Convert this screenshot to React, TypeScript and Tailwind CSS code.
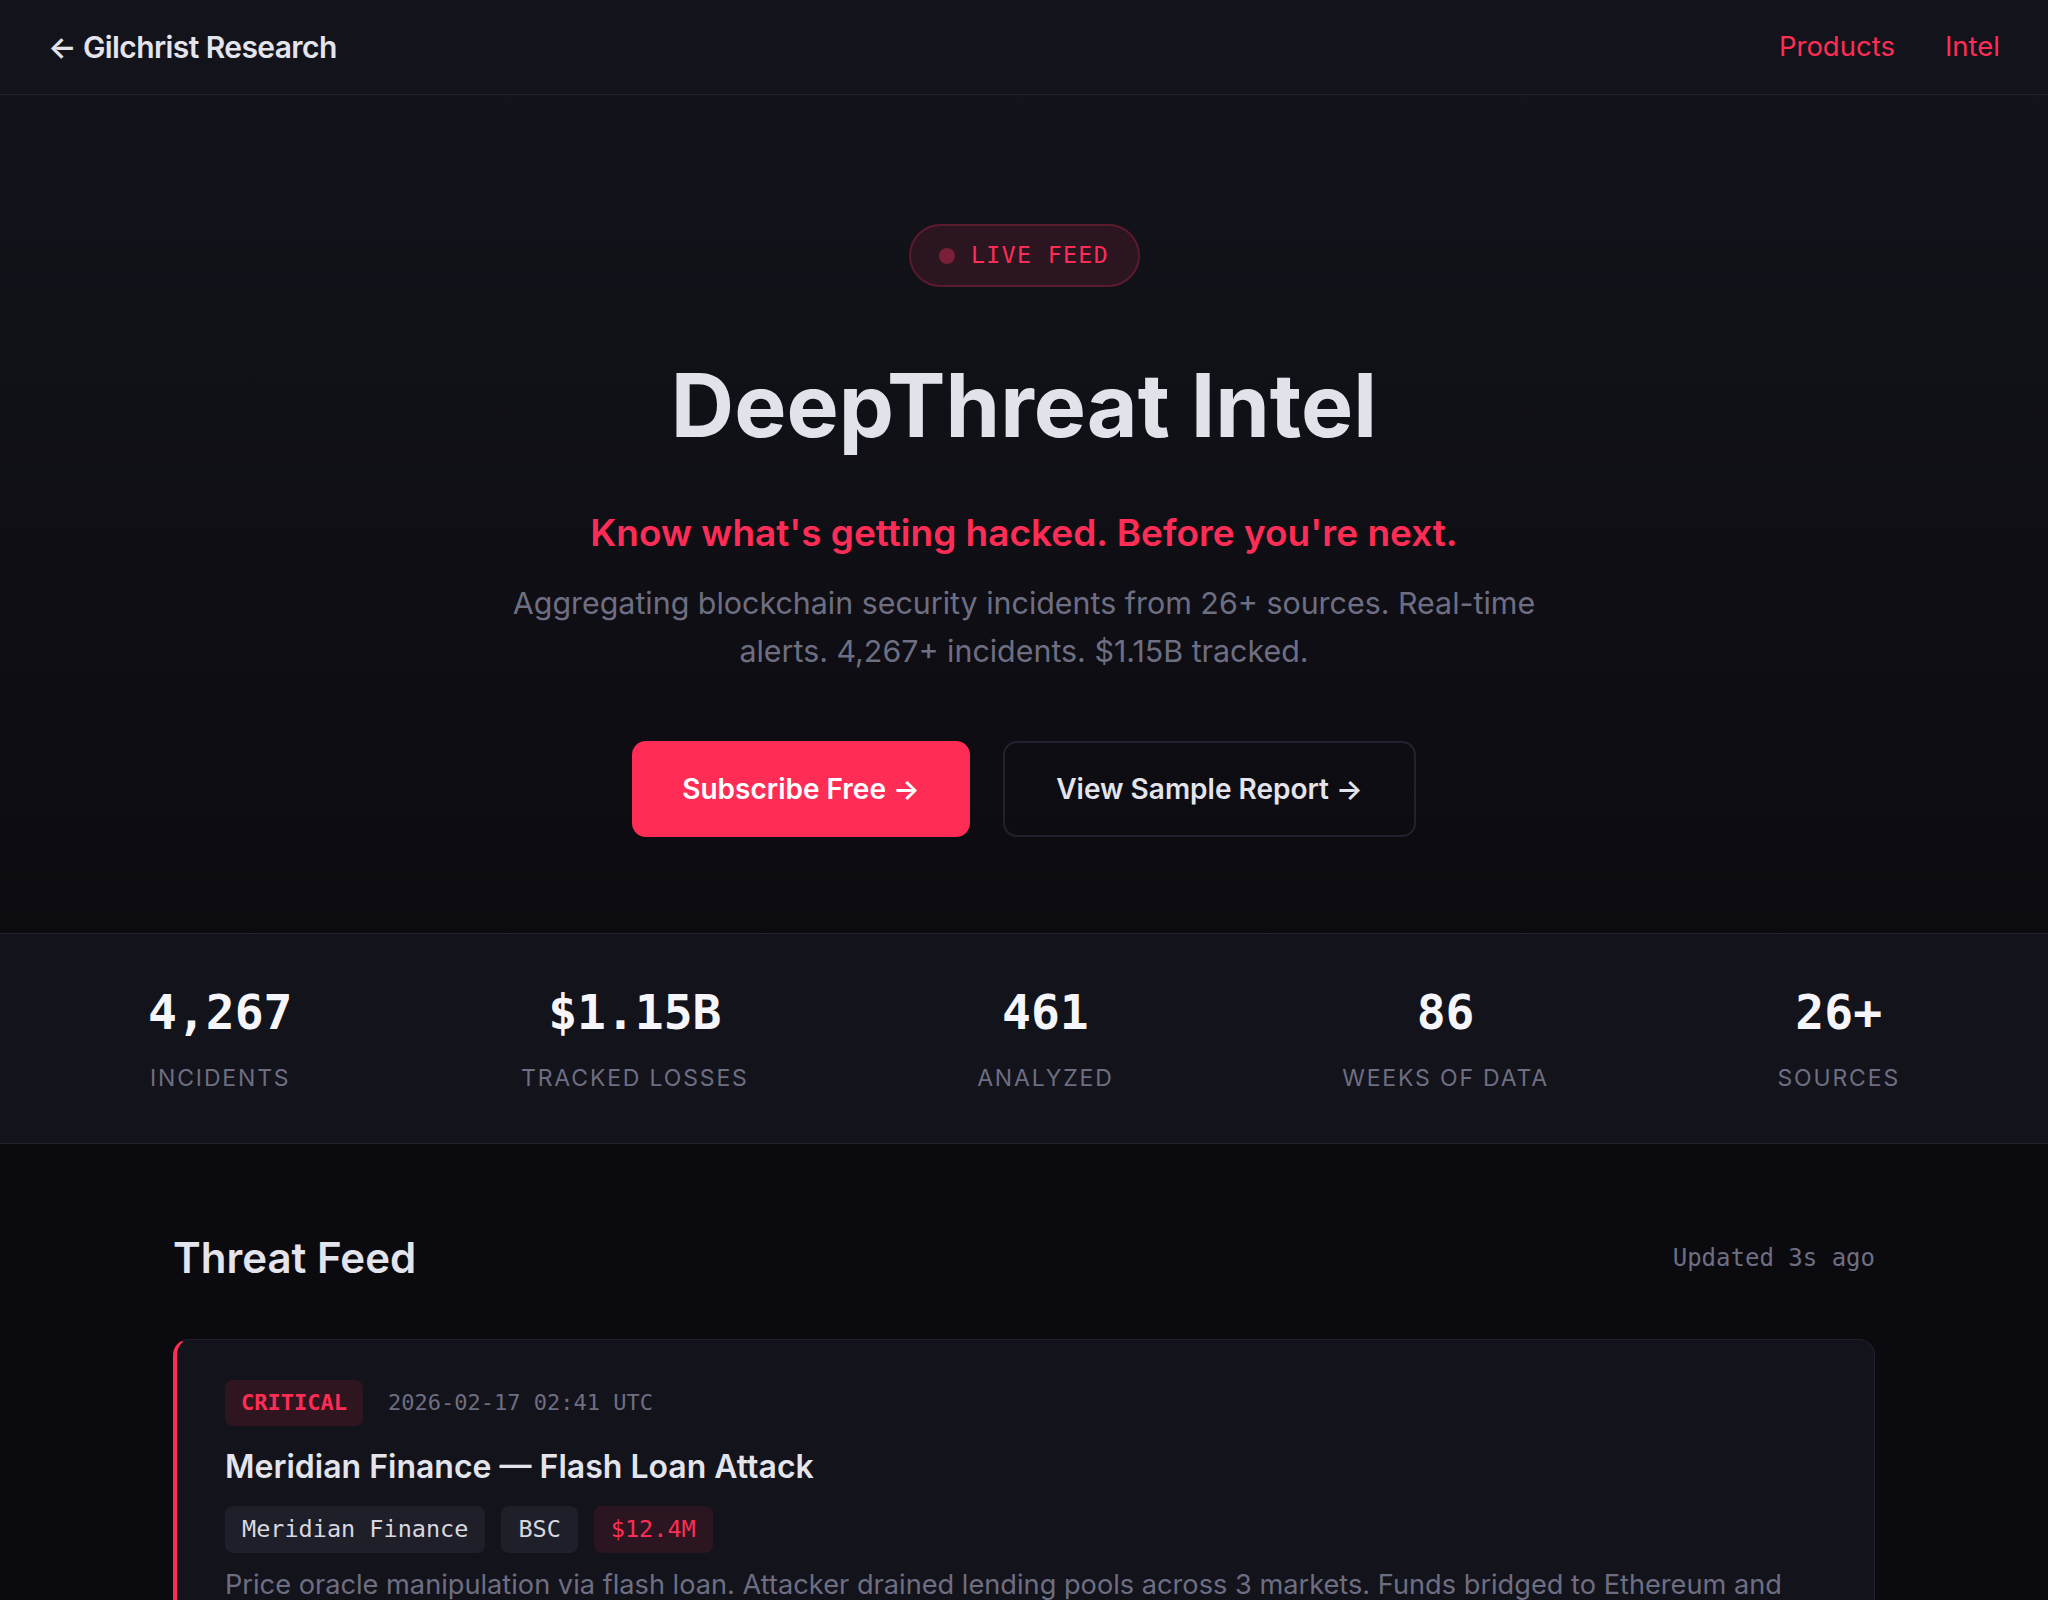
import React from "react";

const stats = [
  { value: "4,267", label: "Incidents" },
  { value: "$1.15B", label: "Tracked Losses" },
  { value: "461", label: "Analyzed" },
  { value: "86", label: "Weeks of Data" },
  { value: "26+", label: "Sources" },
];

export default function App() {
  return (
    <div className="min-h-screen bg-[#0a0a0f] font-['Inter','Noto_Sans',sans-serif] text-[#e2e2ea]">
      {/* Nav */}
      <nav className="flex h-[95px] items-center justify-between border-b border-[#22222e] bg-[#13131b] px-12">
        <a className="text-[30px] font-semibold leading-none tracking-[-0.02em] text-[#e4e4ec]">
          ← Gilchrist Research
        </a>
        <div className="flex items-center gap-[50px] text-[27.5px] leading-none text-[#ff2d55]">
          <a>Products</a>
          <a>Intel</a>
        </div>
      </nav>

      {/* Hero */}
      <section className="flex flex-col items-center bg-gradient-to-b from-[#13131b] to-[#0b0b10] pt-[129px] pb-[96px] text-center">
        <div className="flex h-[63px] w-[231px] items-center justify-center gap-[16px] rounded-full border-2 border-[#5c1a2e] bg-[#2a1520]">
          <span className="h-4 w-4 rounded-full bg-[#7a1f38]" />
          <span className="font-['DejaVu_Sans_Mono',monospace] text-[23px] leading-none tracking-[1.5px] text-[#ff2d55]">
            LIVE FEED
          </span>
        </div>

        <h1 className="mt-[75px] text-[87.7px] font-bold leading-none tracking-normal text-[#e2e2ea]">
          DeepThreat Intel
        </h1>

        <p className="mt-[61px] text-[37px] font-semibold leading-[1.2] text-[#ff2d55]">
          Know what's getting hacked. Before you're next.
        </p>

        <p className="mt-[24px] max-w-[1060px] text-[30.4px] leading-[48px] text-[#6e6e82]">
          Aggregating blockchain security incidents from 26+ sources. Real-time alerts. 4,267+ incidents. $1.15B tracked.
        </p>

        <div className="mt-[66px] flex items-center gap-[33px]">
          <button className="flex h-[96px] w-[338px] items-center justify-center rounded-[14px] bg-[#ff2d55] text-[28px] font-semibold text-white">
            Subscribe Free →
          </button>
          <button className="flex h-[96px] w-[413px] items-center justify-center rounded-[14px] border-2 border-[#22222f] bg-transparent text-[28px] font-semibold text-[#e4e4ec]">
            View Sample Report →
          </button>
        </div>
      </section>

      {/* Stats */}
      <section className="flex items-start justify-between border-y border-[#23232f] bg-[#13131b] px-[148px] pt-[54px] pb-[47px]">
        {stats.map((s) => (
          <div key={s.label} className="flex flex-col items-center">
            <div className="font-['DejaVu_Sans_Mono',monospace] text-[48px] font-bold leading-none text-[#f6f6fa]">
              {s.value}
            </div>
            <div className="mt-[25px] text-[23px] uppercase leading-[1.5] tracking-[0.08em] text-[#6e6e82]">
              {s.label}
            </div>
          </div>
        ))}
      </section>

      {/* Threat feed */}
      <section className="mx-auto w-[1702px] pt-[90px] pb-16">
        <div className="flex items-center justify-between">
          <h2 className="text-[42px] font-semibold leading-[1.15] text-[#e4e4ec]">Threat Feed</h2>
          <span className="font-['DejaVu_Sans_Mono',monospace] text-[24px] leading-[1.5] text-[#6e6e82]">
            Updated 3s ago
          </span>
        </div>

        <div className="mt-[57px] rounded-2xl border border-l-4 border-[#22222e] border-l-[#ff2d55] bg-[#13131b] px-12 pt-10 pb-10">
          <div className="flex items-center gap-[25px]">
            <span className="flex h-[46px] items-center rounded-lg bg-[#2e1520] px-4 font-['DejaVu_Sans_Mono',monospace] text-[22px] font-bold leading-none text-[#ff2d55]">
              CRITICAL
            </span>
            <span className="font-['DejaVu_Sans_Mono',monospace] text-[22px] leading-none text-[#6e6e82]">
              2026-02-17 02:41 UTC
            </span>
          </div>

          <h3 className="mt-[20px] text-[32px] font-semibold leading-[1.3] text-[#e4e4ec]">
            Meridian Finance — Flash Loan Attack
          </h3>

          <div className="mt-[19px] flex items-center gap-4 font-['DejaVu_Sans_Mono',monospace] text-[23.5px] leading-none">
            <span className="flex h-[47px] items-center rounded-lg bg-[#1f1f29] px-[17px] text-[#d8d8e0]">
              Meridian Finance
            </span>
            <span className="flex h-[47px] items-center rounded-lg bg-[#1f1f29] px-[17px] text-[#d8d8e0]">
              BSC
            </span>
            <span className="flex h-[47px] items-center rounded-lg bg-[#2a1520] px-[17px] text-[#ff2d55]">
              $12.4M
            </span>
          </div>

          <p className="mt-[10px] text-[27.2px] leading-[1.6] text-[#6e6e82]">
            Price oracle manipulation via flash loan. Attacker drained lending pools across 3 markets. Funds bridged to Ethereum and laundered through mixers within minutes of the exploit.
          </p>
        </div>
      </section>
    </div>
  );
}
